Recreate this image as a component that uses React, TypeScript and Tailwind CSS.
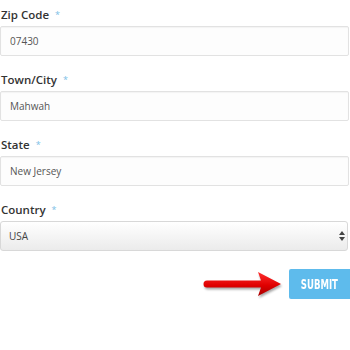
import React from 'react';

const fields = [
  { label: 'Zip Code', value: '07430' },
  { label: 'Town/City', value: 'Mahwah' },
  { label: 'State', value: 'New Jersey' },
];

const Label: React.FC<{ text: string }> = ({ text }) => (
  <label className="flex h-[18px] items-center pl-[1px] text-[11.5px] font-semibold text-[#333] mb-[2px]">
    {text}
    <span className="ml-[6px] text-[9px] font-normal text-[#7cc0e6]">*</span>
  </label>
);

const Arrow = () => (
  <svg width="84" height="32" viewBox="0 0 84 32" className="drop-shadow-[1px_2px_1px_rgba(0,0,0,0.35)]">
    <defs>
      <linearGradient id="red" x1="0" y1="0" x2="0" y2="1">
        <stop offset="0" stopColor="#ff3030" />
        <stop offset="0.55" stopColor="#e00000" />
        <stop offset="1" stopColor="#a80000" />
      </linearGradient>
    </defs>
    <path
      d="M6 12.5 L60 12.5 L57 4 L80 16 L57 28 L60 19.5 L6 19.5 A3.5 3.5 0 0 1 6 12.5 Z"
      fill="url(#red)"
    />
  </svg>
);

export default function App() {
  return (
    <div className="w-[350px] h-[350px] bg-white pt-[6px] overflow-hidden" style={{ fontFamily: '"Open Sans", sans-serif' }}>
      {fields.map((f) => (
        <div key={f.label} className="mb-[15px]">
          <Label text={f.label} />
          <input
            readOnly
            value={f.value}
            className="block h-[30px] w-[349px] rounded-[2px] border border-[#e2e2e2] bg-[#fdfdfd] px-[9px] text-[10px] text-[#555] shadow-[inset_0_1px_1px_rgba(0,0,0,0.04)] outline-none"
          />
        </div>
      ))}

      <div className="mb-[17px]">
        <Label text="Country" />
        <div className="relative w-[348px]">
          <select className="block h-[30px] w-full appearance-none rounded-[3px] border border-[#d8d8d8] bg-gradient-to-b from-[#ffffff] to-[#ebebeb] px-[8px] text-[10px] text-[#444] outline-none">
            <option>USA</option>
          </select>
          <svg width="6" height="10" viewBox="0 0 6 10" className="pointer-events-none absolute right-[3px] top-[10px]">
            <path d="M3 0 L6 4 L0 4 Z M3 10 L6 6 L0 6 Z" fill="#444" />
          </svg>
        </div>
      </div>

      <div className="flex items-center justify-end gap-[4px]">
        <Arrow />
        <button className="flex h-[30px] w-[61px] items-center justify-center rounded-l-[2px] bg-[#5ebbec] text-[14px] font-bold text-white" style={{ fontFamily: '"Liberation Sans Narrow", "DejaVu Sans Condensed", sans-serif' }}>
          <span className="inline-block scale-x-[0.68] scale-y-[1.05]">SUBMIT</span>
        </button>
      </div>
    </div>
  );
}
